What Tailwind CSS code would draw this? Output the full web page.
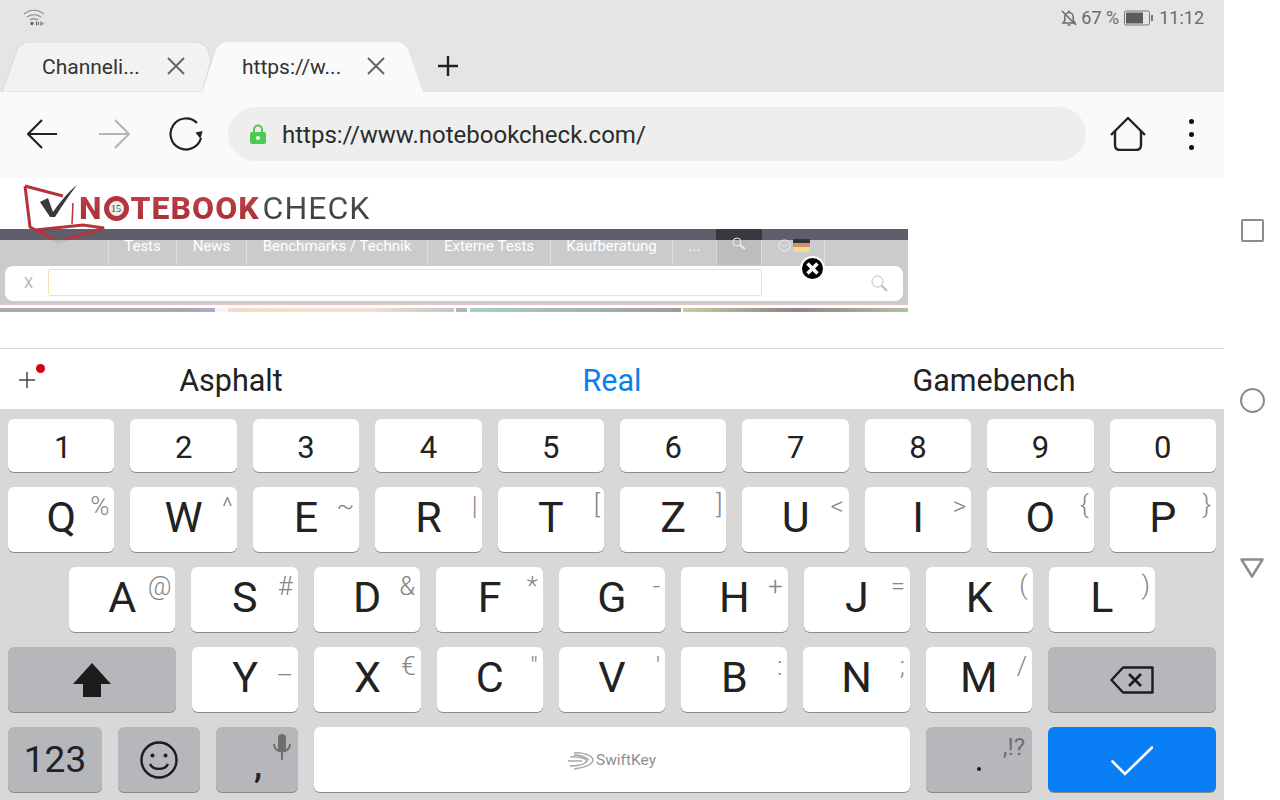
<html lang="en">
<head>
<meta charset="UTF-8" />
<title>Notebookcheck</title>
<script src="https://cdn.jsdelivr.net/npm/@tailwindcss/browser@4"></script>
</head>
<body class="bg-white w-[1280px] h-[800px] overflow-hidden flex font-['Roboto',sans-serif] text-[#222]">
<div class="w-[1224px] h-[800px] flex flex-col">

  <!-- status bar + tabs -->
  <div class="h-[92px] bg-[#e5e5e5] flex flex-col">
    <div class="h-[42px] relative">
      <svg class="absolute left-[22px] top-[8px]" width="24" height="20" viewBox="0 0 24 20" fill="none" stroke="#8a8a8a" stroke-width="1.2"><path d="M2 6c6-5 14-5 20 0M5 9c4-3 10-3 14 0M8 12c2.500-1.500 5.500-1.500 8 0"/><circle cx="10" cy="15.500" r="1.700" fill="#666" stroke="none"/><path d="M14.500 13.500v4M19 13.500v4" stroke="#666"/><path d="M16.500 14v3M21 14.500v2" stroke="#777"/></svg>
      <div class="absolute right-[20px] top-[7px] flex items-center text-[18px] leading-[22px] text-[#6b6b6b]">
        <svg width="18" height="18" viewBox="0 0 18 18" fill="none" stroke="#6b6b6b" stroke-width="1.500" class="mr-[3px]"><path d="M3 14h12l-1.800-2.500V8c0-2.500-1.800-4.500-4.200-4.500S4.800 5.500 4.800 8v3.500z"/><path d="M7.500 16h3M9 1.500v2M2 2l14 14"/></svg>
        <span>67 %</span>
        <svg width="30" height="16" viewBox="0 0 30 16" class="mx-[5px]"><rect x="0.500" y="1" width="25" height="14" rx="1.500" fill="none" stroke="#777"/><rect x="2" y="2.500" width="17" height="11" fill="#5c5c5c"/><rect x="27" y="5" width="2" height="6" fill="#777"/></svg>
        <span>11:12</span>
      </div>
    </div>
    <div class="h-[50px] flex relative">
      <div class="relative w-[208px] ml-[2px] h-[50px]">
        <svg class="absolute inset-0" width="212" height="50" viewBox="0 0 212 50"><path d="M0 50 L15 8 Q18 0 28 0 L190 0 Q203 0 206 8 L209 18 L200 50 Z" fill="#f2f2f2" stroke="#d9d9d9"/></svg>
        <span class="absolute left-[40px] top-[11px] text-[21px] leading-[28px] text-[#333]">Channeli...</span>
        <svg class="absolute left-[165px] top-[15px]" width="18" height="18" viewBox="0 0 18 18" stroke="#666" stroke-width="2"><path d="M1 1l16 16M17 1L1 17"/></svg>
      </div>
      <div class="relative w-[222px] h-[50px] -ml-[8px]">
        <svg class="absolute inset-0" width="222" height="50" viewBox="0 0 222 50"><path d="M0 50 L14 8 Q17 0 28 0 L192 0 Q203 0 206 8 L221 50 Z" fill="#fafafa"/></svg>
        <span class="absolute left-[40px] top-[11px] text-[21px] leading-[28px] text-[#333]">https://w...</span>
        <svg class="absolute left-[165px] top-[15px]" width="18" height="18" viewBox="0 0 18 18" stroke="#666" stroke-width="2"><path d="M1 1l16 16M17 1L1 17"/></svg>
      </div>
      <svg class="ml-[14px] mt-[14px]" width="20" height="20" viewBox="0 0 20 20" stroke="#222" stroke-width="2.400"><path d="M0 10h20M10 0v20"/></svg>
    </div>
  </div>

  <!-- toolbar -->
  <div class="h-[86px] bg-[#fafafa] flex items-center pl-[27px] pb-[2px]">
    <svg width="30" height="30" viewBox="0 0 30 30" fill="none" stroke="#222" stroke-width="2.200"><path d="M30 15H1M15 1L1 15l14 14"/></svg>
    <svg class="ml-[41px]" width="32" height="30" viewBox="0 0 32 30" fill="none" stroke="#b5b5b5" stroke-width="2.200"><path d="M1 15h29M17 1l14 14-14 14"/></svg>
    <svg class="ml-[39px]" width="34" height="34" viewBox="0 0 34 34" fill="none" stroke="#222" stroke-width="2.200"><path d="M28 6A15.500 15.500 0 1 0 32 21"/><path d="M26.500 15.500l7-1.500-2 8z" fill="#222" stroke="none"/></svg>
    <div class="ml-[25px] w-[858px] h-[54px] rounded-[27px] bg-[#eeeeee] flex items-center pl-[22px]">
      <svg width="16" height="20" viewBox="0 0 16 20"><path d="M4 9V5.500a4 4 0 0 1 8 0V9" fill="none" stroke="#4ccb52" stroke-width="2"/><rect x="0" y="8" width="16" height="12" rx="2" fill="#4ccb52"/><circle cx="8" cy="14" r="2" fill="#fafafa"/></svg>
      <span class="ml-[16px] pt-[2px] text-[24px] leading-[30px] text-[#2b2b2b]">https://www.notebookcheck.com/</span>
    </div>
    <svg class="ml-[24px]" width="36" height="34" viewBox="0 0 36 34" fill="none" stroke="#222" stroke-width="2.400" stroke-linejoin="round"><path d="M1 18L18 1l17 17"/><path d="M5 14v14q0 5 5 5h16q5 0 5-5V14"/></svg>
    <div class="ml-[43px] flex flex-col gap-[8px]">
      <div class="w-[5px] h-[5px] rounded-full bg-[#111]"></div>
      <div class="w-[5px] h-[5px] rounded-full bg-[#111]"></div>
      <div class="w-[5px] h-[5px] rounded-full bg-[#111]"></div>
    </div>
  </div>

  <!-- web page -->
  <div class="h-[171px] bg-white border-b border-[#d9d9d9] relative">
    <!-- laptop logo mark, hangs over the nav bar -->
    <svg class="absolute left-[22px] top-[4px]" width="90" height="62" viewBox="0 0 90 62" fill="none">
      <path d="M3 4L41 14M3 4l5 41 28 15 46-14-21-3-48 5" stroke="#b5343c" stroke-width="3"/>
      <path d="M51 21l-1 21" stroke="#b5343c" stroke-width="1.500"/>
      <path d="M18 20l8-4 5 14C38 20 46 10 55 3 47 13 39 26 33 35h-5z" fill="#3a3a3c"/>
    </svg>
    <div class="h-[51px] pl-[79px] pt-[11px] flex text-[32px] leading-[38px] tracking-[1px]">
      <span class="font-extrabold text-transparent bg-clip-text bg-linear-to-b from-[#c4444a] to-[#a02a32]">N</span>
      <span class="w-[25px] h-[25px] mt-[7px] ml-[1px] rounded-full bg-[#b5343c] flex items-center justify-center"><span class="w-[15px] h-[15px] rounded-full bg-[#eee] text-[#333] text-[10px] leading-[15px] text-center tracking-normal font-['Liberation_Serif',serif]">15</span></span>
      <span class="ml-[2px] font-extrabold text-transparent bg-clip-text bg-linear-to-b from-[#c4444a] to-[#a02a32]">TEBOOK</span>
      <span class="font-normal ml-[3px] text-transparent bg-clip-text bg-linear-to-b from-[#5a5a5a] to-[#333]">CHECK</span>
    </div>
    <div class="w-[908px] h-[11px] bg-[#5e5f6b]"></div>
    <div class="relative w-[908px] h-[65px] bg-[#c4c5c7]/90 flex flex-col">
      <div class="h-[25px] flex pl-[108px] text-[15px] leading-[12px] text-white">
        <div class="w-[68px] border-l border-[#dcdcde] text-center">Tests</div>
        <div class="w-[70px] border-l border-[#dcdcde] text-center">News</div>
        <div class="w-[181px] border-l border-[#dcdcde] text-center">Benchmarks / Technik</div>
        <div class="w-[123px] border-l border-[#dcdcde] text-center">Externe Tests</div>
        <div class="w-[122px] border-l border-[#dcdcde] text-center">Kaufberatung</div>
        <div class="w-[44px] border-l border-[#dcdcde] text-center">...</div>
        <div class="w-[45px] border-l border-[#dcdcde]"></div>
        <div class="w-[64px] border-x border-[#dcdcde]"></div>
      </div>
      <div class="mt-[1px] mx-[5px] h-[35px] bg-white rounded-[8px] flex items-center pl-[19px]">
        <span class="w-[24px] text-[14.500px] text-[#b5b5b5]">X</span>
        <div class="w-[714px] h-[27px] -mt-[2px] border-[1.500px] border-[#f6dfb8] rounded-[2px]"></div>
        <svg class="ml-[109px]" width="17" height="17" viewBox="0 0 17 17" fill="none" stroke="#bdbdbd" stroke-width="1"><circle cx="6.500" cy="6.500" r="5.500"/><path d="M10.500 10.500l5.500 5.500" stroke-width="2"/></svg>
      </div>
      <div class="flex-1 border-b border-[#e3c3c5]"></div>
    </div>
    <div class="w-[908px] h-[3px]"></div>
    <div class="w-[908px] h-[4px] flex">
      <div class="w-[215px] bg-linear-to-r from-[#adaaa9] from-70% via-[#aaa7a6] via-85% to-[#a8acd0]"></div>
      <div class="w-[13px] bg-[#f4f4f4]"></div>
      <div class="w-[226px] bg-linear-to-r from-[#f0dcc8] via-[#f3e2d0] via-60% to-[#c4c6c8]"></div>
      <div class="w-[2px]"></div>
      <div class="w-[11px] bg-[#b5b5b5]"></div>
      <div class="w-[3px]"></div>
      <div class="w-[211px] bg-linear-to-r from-[#a8cfcc] via-[#a9b5b0] to-[#9a9c9c]"></div>
      <div class="w-[2px]"></div>
      <div class="w-[225px] bg-linear-to-r from-[#c3d0a0] via-[#8f8388] to-[#b4c09c]"></div>
    </div>

    <!-- nav search + flag on the dark tab -->
    <div class="absolute left-[716px] top-[51px] w-[46px] h-[11px] bg-[#3a3940]"></div>
    <div class="absolute left-[716px] top-[62px] w-[46px] h-[25px] bg-[#bcbdbf] border-x border-[#dcdcde]"></div>
    <svg class="absolute left-[732px] top-[59px]" width="14" height="14" viewBox="0 0 14 14" fill="none" stroke="#f0f0f0"><circle cx="5" cy="5" r="4"/><path d="M8 8l5 4" stroke-width="2"/></svg>
    <svg class="absolute left-[778px] top-[61px]" width="13" height="13" viewBox="0 0 13 13" fill="none" stroke="#f0f0f0"><circle cx="6.500" cy="6.500" r="5.500"/><path d="M4 5.500l2.500 2.500L9 5.500"/></svg>
    <div class="absolute left-[793px] top-[61px] w-[17px] h-[13px] flex flex-col">
      <div class="h-[4px] bg-[#333]"></div>
      <div class="h-[4px] bg-[#d98b7a]"></div>
      <div class="h-[5px] bg-[#f2dc8a]"></div>
    </div>
    <!-- close button -->
    <div class="absolute left-[800px] top-[78px] w-[25px] h-[25px] rounded-full bg-black border-2 border-white flex items-center justify-center">
      <svg width="13" height="13" viewBox="0 0 13 13" stroke="#fff" stroke-width="3.500"><path d="M1.500 1.500l10 10M11.500 1.500l-10 10"/></svg>
    </div>
  </div>

  <!-- suggestions -->
  <div class="h-[60px] bg-white relative grid grid-cols-[462px_300px_464px] text-[30.500px] leading-[64px] text-center">
    <div>Asphalt</div>
    <div class="text-[#0a7ff0]">Real</div>
    <div>Gamebench</div>
    <svg class="absolute left-[19px] top-[23px]" width="16" height="16" viewBox="0 0 16 16" stroke="#444" stroke-width="1.500"><path d="M0 8h16M8 0v16"/></svg>
    <div class="absolute left-[36px] top-[15px] w-[9px] h-[9px] rounded-full bg-[#d0021b]"></div>
  </div>

  <!-- keyboard -->
  <div class="h-[391px] bg-[#d8d8d8] px-[8px] pt-[10px] flex flex-col gap-[15px] text-[#222]">
    <div class="h-[53px] grid grid-cols-10 gap-x-[16px] text-[31px] leading-none">
      <div class="bg-white rounded-[6px] shadow-[0_1px_0_#8c8c8c] flex items-center justify-center pt-[3px] pl-[3px]">1</div>
      <div class="bg-white rounded-[6px] shadow-[0_1px_0_#8c8c8c] flex items-center justify-center pt-[3px]">2</div>
      <div class="bg-white rounded-[6px] shadow-[0_1px_0_#8c8c8c] flex items-center justify-center pt-[3px]">3</div>
      <div class="bg-white rounded-[6px] shadow-[0_1px_0_#8c8c8c] flex items-center justify-center pt-[3px]">4</div>
      <div class="bg-white rounded-[6px] shadow-[0_1px_0_#8c8c8c] flex items-center justify-center pt-[3px]">5</div>
      <div class="bg-white rounded-[6px] shadow-[0_1px_0_#8c8c8c] flex items-center justify-center pt-[3px]">6</div>
      <div class="bg-white rounded-[6px] shadow-[0_1px_0_#8c8c8c] flex items-center justify-center pt-[3px]">7</div>
      <div class="bg-white rounded-[6px] shadow-[0_1px_0_#8c8c8c] flex items-center justify-center pt-[3px]">8</div>
      <div class="bg-white rounded-[6px] shadow-[0_1px_0_#8c8c8c] flex items-center justify-center pt-[3px]">9</div>
      <div class="bg-white rounded-[6px] shadow-[0_1px_0_#8c8c8c] flex items-center justify-center pt-[3px]">0</div>
    </div>
    <div class="h-[65px] grid grid-cols-10 gap-x-[16px] text-[43px] leading-none">
      <div class="relative bg-white rounded-[6px] shadow-[0_1px_0_#8c8c8c] flex items-center justify-center pb-[4px]">Q<span class="absolute right-[5px] top-[5px] text-[26px] leading-[28px] font-light text-[#858585]">%</span></div>
      <div class="relative bg-white rounded-[6px] shadow-[0_1px_0_#8c8c8c] flex items-center justify-center pb-[4px]">W<span class="absolute right-[4px] top-[5px] text-[26px] leading-[28px] font-light text-[#858585]">^</span></div>
      <div class="relative bg-white rounded-[6px] shadow-[0_1px_0_#8c8c8c] flex items-center justify-center pb-[4px]">E<span class="absolute right-[5px] top-[5px] text-[26px] leading-[28px] font-light text-[#858585]">~</span></div>
      <div class="relative bg-white rounded-[6px] shadow-[0_1px_0_#8c8c8c] flex items-center justify-center pb-[4px]">R<span class="absolute right-[4px] top-[5px] text-[26px] leading-[28px] font-light text-[#858585]">|</span></div>
      <div class="relative bg-white rounded-[6px] shadow-[0_1px_0_#8c8c8c] flex items-center justify-center pb-[4px]">T<span class="absolute right-[4px] top-[3px] text-[26px] leading-[28px] font-light text-[#858585]">[</span></div>
      <div class="relative bg-white rounded-[6px] shadow-[0_1px_0_#8c8c8c] flex items-center justify-center pb-[4px]">Z<span class="absolute right-[4px] top-[3px] text-[26px] leading-[28px] font-light text-[#858585]">]</span></div>
      <div class="relative bg-white rounded-[6px] shadow-[0_1px_0_#8c8c8c] flex items-center justify-center pb-[4px]">U<span class="absolute right-[5px] top-[5px] text-[26px] leading-[28px] font-light text-[#858585]">&lt;</span></div>
      <div class="relative bg-white rounded-[6px] shadow-[0_1px_0_#8c8c8c] flex items-center justify-center pb-[4px]">I<span class="absolute right-[5px] top-[5px] text-[26px] leading-[28px] font-light text-[#858585]">&gt;</span></div>
      <div class="relative bg-white rounded-[6px] shadow-[0_1px_0_#8c8c8c] flex items-center justify-center pb-[4px]">O<span class="absolute right-[5px] top-[3px] text-[26px] leading-[28px] font-light text-[#858585]">{</span></div>
      <div class="relative bg-white rounded-[6px] shadow-[0_1px_0_#8c8c8c] flex items-center justify-center pb-[4px]">P<span class="absolute right-[5px] top-[3px] text-[26px] leading-[28px] font-light text-[#858585]">}</span></div>
    </div>
    <div class="h-[65px] grid grid-cols-9 gap-x-[16px] px-[61px] text-[43px] leading-none">
      <div class="relative bg-white rounded-[6px] shadow-[0_1px_0_#8c8c8c] flex items-center justify-center pb-[4px]">A<span class="absolute right-[4px] top-[5px] text-[26px] leading-[28px] font-light text-[#858585]">@</span></div>
      <div class="relative bg-white rounded-[6px] shadow-[0_1px_0_#8c8c8c] flex items-center justify-center pb-[4px]">S<span class="absolute right-[5px] top-[5px] text-[26px] leading-[28px] font-light text-[#858585]">#</span></div>
      <div class="relative bg-white rounded-[6px] shadow-[0_1px_0_#8c8c8c] flex items-center justify-center pb-[4px]">D<span class="absolute right-[5px] top-[5px] text-[26px] leading-[28px] font-light text-[#858585]">&amp;</span></div>
      <div class="relative bg-white rounded-[6px] shadow-[0_1px_0_#8c8c8c] flex items-center justify-center pb-[4px]">F<span class="absolute right-[5px] top-[5px] text-[26px] leading-[28px] font-light text-[#858585]">*</span></div>
      <div class="relative bg-white rounded-[6px] shadow-[0_1px_0_#8c8c8c] flex items-center justify-center pb-[4px]">G<span class="absolute right-[5px] top-[5px] text-[26px] leading-[28px] font-light text-[#858585]">-</span></div>
      <div class="relative bg-white rounded-[6px] shadow-[0_1px_0_#8c8c8c] flex items-center justify-center pb-[4px]">H<span class="absolute right-[5px] top-[5px] text-[26px] leading-[28px] font-light text-[#858585]">+</span></div>
      <div class="relative bg-white rounded-[6px] shadow-[0_1px_0_#8c8c8c] flex items-center justify-center pb-[4px]">J<span class="absolute right-[5px] top-[5px] text-[26px] leading-[28px] font-light text-[#858585]">=</span></div>
      <div class="relative bg-white rounded-[6px] shadow-[0_1px_0_#8c8c8c] flex items-center justify-center pb-[4px]">K<span class="absolute right-[5px] top-[4px] text-[26px] leading-[28px] font-light text-[#858585]">(</span></div>
      <div class="relative bg-white rounded-[6px] shadow-[0_1px_0_#8c8c8c] flex items-center justify-center pb-[4px]">L<span class="absolute right-[5px] top-[4px] text-[26px] leading-[28px] font-light text-[#858585]">)</span></div>
    </div>
    <div class="h-[65px] grid grid-cols-[168px_repeat(7,1fr)_168px] gap-x-[16px] text-[43px] leading-none">
      <div class="bg-[#b5b7bb] rounded-[6px] shadow-[0_1px_0_#8c8c8c] flex items-center justify-center">
        <svg width="38" height="34" viewBox="0 0 38 34"><path d="M19 0L38 21H28V34H10V21H0z" fill="#1c1c1c"/></svg>
      </div>
      <div class="relative bg-white rounded-[6px] shadow-[0_1px_0_#8c8c8c] flex items-center justify-center pb-[4px]">Y<span class="absolute right-[5px] top-[14px] text-[26px] leading-[28px] font-light text-[#858585]">–</span></div>
      <div class="relative bg-white rounded-[6px] shadow-[0_1px_0_#8c8c8c] flex items-center justify-center pb-[4px]">X<span class="absolute right-[5px] top-[5px] text-[26px] leading-[28px] font-light text-[#858585]">€</span></div>
      <div class="relative bg-white rounded-[6px] shadow-[0_1px_0_#8c8c8c] flex items-center justify-center pb-[4px]">C<span class="absolute right-[5px] top-[5px] text-[26px] leading-[28px] font-light text-[#858585]">"</span></div>
      <div class="relative bg-white rounded-[6px] shadow-[0_1px_0_#8c8c8c] flex items-center justify-center pb-[4px]">V<span class="absolute right-[5px] top-[5px] text-[26px] leading-[28px] font-light text-[#858585]">'</span></div>
      <div class="relative bg-white rounded-[6px] shadow-[0_1px_0_#8c8c8c] flex items-center justify-center pb-[4px]">B<span class="absolute right-[5px] top-[5px] text-[26px] leading-[28px] font-light text-[#858585]">:</span></div>
      <div class="relative bg-white rounded-[6px] shadow-[0_1px_0_#8c8c8c] flex items-center justify-center pb-[4px]">N<span class="absolute right-[5px] top-[5px] text-[26px] leading-[28px] font-light text-[#858585]">;</span></div>
      <div class="relative bg-white rounded-[6px] shadow-[0_1px_0_#8c8c8c] flex items-center justify-center pb-[4px]">M<span class="absolute right-[5px] top-[5px] text-[26px] leading-[28px] font-light text-[#858585]">/</span></div>
      <div class="bg-[#b5b7bb] rounded-[6px] shadow-[0_1px_0_#8c8c8c] flex items-center justify-center">
        <svg width="44" height="28" viewBox="0 0 44 28" fill="none" stroke="#1c1c1c" stroke-width="2.400" stroke-linejoin="round"><path d="M13 1.500H42.500V26.500H13L1.500 14z"/><path d="M19 8l12 12M31 8L19 20" stroke-width="2.600"/></svg>
      </div>
    </div>
    <div class="h-[65px] grid grid-cols-[94px_82px_82px_596px_106px_168px] gap-x-[16px] leading-none">
      <div class="bg-[#b5b7bb] rounded-[6px] shadow-[0_1px_0_#8c8c8c] flex items-center justify-center text-[37px]">123</div>
      <div class="bg-[#b5b7bb] rounded-[6px] shadow-[0_1px_0_#8c8c8c] flex items-center justify-center">
        <svg width="38" height="38" viewBox="0 0 38 38" fill="none" stroke="#1c1c1c" stroke-width="2.400"><circle cx="19" cy="19" r="17.500"/><circle cx="12.500" cy="14.500" r="2" fill="#1c1c1c" stroke="none"/><circle cx="25.500" cy="14.500" r="2" fill="#1c1c1c" stroke="none"/><path d="M10 23c3 6.500 15 6.500 18 0"/></svg>
      </div>
      <div class="relative bg-[#b5b7bb] rounded-[6px] shadow-[0_1px_0_#8c8c8c]">
        <span class="absolute left-[38px] top-[18px] text-[36px] leading-[40px] font-medium">,</span>
        <svg class="absolute right-[7px] top-[7px]" width="18" height="26" viewBox="0 0 18 26" fill="none" stroke="#6e6e6e" stroke-width="2"><rect x="5" y="0" width="8" height="18" rx="4" fill="#6e6e6e" stroke="none"/><path d="M1 10c0 10 16 10 16 0M9 18v8"/></svg>
      </div>
      <div class="bg-white rounded-[6px] shadow-[0_1px_0_#8c8c8c] flex items-center justify-center pt-[2px]">
        <svg width="26" height="18" viewBox="0 0 26 18" fill="none" stroke="#a8a8a8" stroke-width="1.400"><path d="M6 1c8-1 18 2 19 7 0 4-8 8-19 9M2 5c8-1 15 1 17 4-2 3-9 5-17 5M0 9h14M6 3c6 0 12 2 15 5"/></svg>
        <span class="ml-[2px] text-[15.500px] text-[#8f8f8f]">SwiftKey</span>
      </div>
      <div class="relative bg-[#b5b7bb] rounded-[6px] shadow-[0_1px_0_#8c8c8c]">
        <span class="absolute left-[51px] top-[40px] w-[4px] h-[4px] rounded-full bg-[#1c1c1c]"></span>
        <span class="absolute right-[7px] top-[7px] text-[24px] leading-[26px] text-[#6e6e6e]">,!?</span>
      </div>
      <div class="bg-[#0a7ff5] rounded-[6px] shadow-[0_1px_0_#8c8c8c] flex items-center justify-center pt-[3px]">
        <svg width="42" height="30" viewBox="0 0 42 30" fill="none" stroke="#fff" stroke-width="2.600" stroke-linecap="round"><path d="M1.500 15.500L14 28 41 1.500"/></svg>
      </div>
    </div>
  </div>
</div>

<!-- android nav buttons -->
<div class="w-[56px] h-[800px] flex flex-col items-center pt-[219px]">
  <div class="w-[23px] h-[23px] border-[2.500px] border-[#8c8c8c] rounded-[2px]"></div>
  <div class="mt-[146px] w-[25px] h-[25px] border-[2.500px] border-[#8c8c8c] rounded-full"></div>
  <svg class="mt-[144px]" width="26" height="22" viewBox="0 0 26 22" fill="none" stroke="#8c8c8c" stroke-width="2.500" stroke-linejoin="round"><path d="M2.500 2.500h21L13 19.500z"/></svg>
</div>
</body>
</html>
